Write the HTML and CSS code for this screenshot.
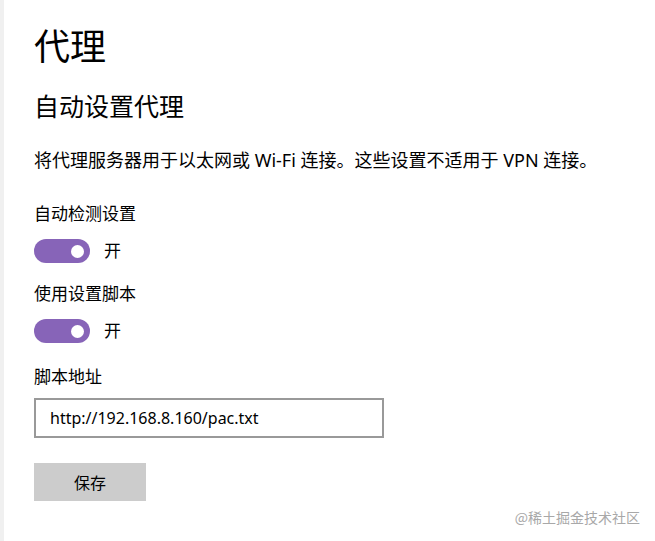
FILE: index.html
```html
<!DOCTYPE html>
<html lang="zh-CN">
<head>
    <meta charset="UTF-8">
    <title>代理</title>
    <link rel="stylesheet" href="styles.css">
</head>
<body>
    <div class="page">
        <h1 class="title">代理</h1>
        <h2 class="subtitle">自动设置代理</h2>
        <p class="desc">将代理服务器用于以太网或 Wi-Fi 连接。这些设置不适用于 VPN 连接。</p>

        <div class="label">自动检测设置</div>
        <div class="toggle-row">
            <span class="toggle"><span class="knob"></span></span>
            <span class="state">开</span>
        </div>

        <div class="label">使用设置脚本</div>
        <div class="toggle-row">
            <span class="toggle"><span class="knob"></span></span>
            <span class="state">开</span>
        </div>

        <div class="label label-last">脚本地址</div>
        <input class="address" type="text" value="http://192.168.8.160/pac.txt">

        <button class="save">保存</button>
    </div>
    <div class="watermark">@稀土掘金技术社区</div>
</body>
</html>
```

FILE: styles.css
```css
body {
    margin: 0;
    height: 541px;
    background: #fff;
    font-family: "Noto Sans", "Noto Sans CJK SC", sans-serif;
    color: #000;
    border-left: 4px solid #f0f0f0;
    box-sizing: border-box;
    position: relative;
    overflow: hidden;
}
.page {
    display: flex;
    flex-direction: column;
    align-items: flex-start;
    padding: 23px 0 0 30px;
}
.title {
    margin: 0;
    font-size: 36px;
    font-weight: normal;
    line-height: 48px;
}
.subtitle {
    margin: 18px 0 0;
    font-size: 25px;
    font-weight: normal;
    line-height: 34px;
}
.desc {
    margin: 25px 0 0;
    font-size: 18px;
    line-height: 24px;
}
.label {
    margin-top: 30px;
    font-size: 17px;
    line-height: 24px;
}
.toggle-row {
    display: flex;
    align-items: center;
    gap: 14px;
    margin-top: 13px;
}
.toggle {
    width: 56px;
    height: 24px;
    border-radius: 12px;
    background: #8764b8;
    display: flex;
    align-items: center;
    justify-content: flex-end;
    padding-right: 6px;
    box-sizing: border-box;
}
.knob {
    width: 13px;
    height: 13px;
    border-radius: 50%;
    background: #fff;
}
.state {
    font-size: 17px;
    line-height: 24px;
}
.toggle-row + .label {
    margin-top: 19px;
}
.toggle-row + .label-last {
    margin-top: 22px;
}
.address {
    margin-top: 9px;
    width: 350px;
    height: 40px;
    box-sizing: border-box;
    border: 2px solid #999;
    padding: 0 14px;
    font-family: "Noto Sans", sans-serif;
    font-size: 16px;
    color: #000;
    outline: none;
}
.save {
    margin-top: 25px;
    width: 112px;
    height: 38px;
    border: none;
    background: #ccc;
    font-family: "Noto Sans CJK SC", sans-serif;
    font-size: 16px;
    color: #000;
}
.watermark {
    position: absolute;
    right: 15px;
    bottom: 14px;
    font-family: "Noto Sans CJK SC", sans-serif;
    font-size: 14px;
    color: #a8a8a8;
}
```
